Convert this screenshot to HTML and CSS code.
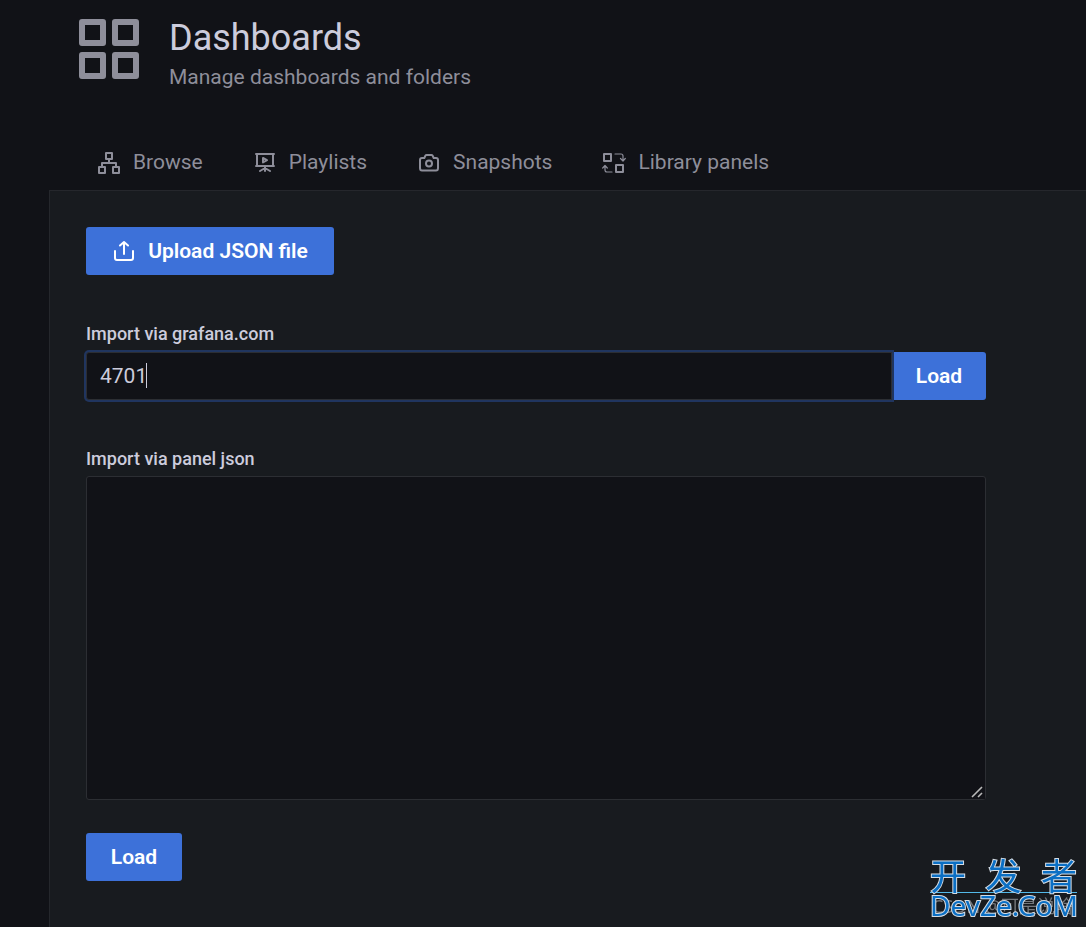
FILE: index.html
```html
<!DOCTYPE html>
<html lang="en">
<head>
<meta charset="utf-8">
<title>Dashboards</title>
<meta name="viewport" content="width=device-width, initial-scale=1">
<link rel="stylesheet" href="styles.css">
</head>
<body>
<div class="page">
  <header class="header">
    <div class="heading">
      <svg class="heading-icon" viewBox="0 0 60 60" fill="none" stroke="currentColor" stroke-width="6" stroke-linejoin="round" aria-hidden="true">
        <path d="M3 3h21v21H3zM36 3h21v21H36zM3 36h21v21H3zM36 36h21v21H36z"/>
      </svg>
      <div>
        <h1 class="title">Dashboards</h1>
        <p class="subtitle">Manage dashboards and folders</p>
      </div>
    </div>
    <nav class="tabs">
      <a class="tab" href="#browse">
        <svg class="icon" viewBox="0 0 24 24" fill="none" stroke="currentColor" stroke-width="2" stroke-linejoin="round" aria-hidden="true">
          <path d="M9 3h6v6H9zM2 17h6v6H2zM16 17h6v6h-6zM12 9v4M5 17v-4h14v4"/>
        </svg>Browse</a>
      <a class="tab" href="#playlists">
        <svg class="icon" viewBox="0 0 24 24" fill="none" stroke="currentColor" stroke-width="2" stroke-linecap="round" stroke-linejoin="round" aria-hidden="true">
          <path d="M3 4h18M4 4v12M20 4v12M3 16h18M12 16v5M12 18l-5 3M12 18l5 3M10 8v4.500l4-2.300z"/>
        </svg>Playlists</a>
      <a class="tab" href="#snapshots">
        <svg class="icon" viewBox="0 0 24 24" fill="none" stroke="currentColor" stroke-width="2" stroke-linejoin="round" aria-hidden="true">
          <path d="M5 8h2.300l1.200-2.500Q8.800 5 9.500 5h5q.7 0 1 .5L16.700 8H19q2 0 2 2v8q0 2.500-2 2.500H5q-2 0-2-2.500V10q0-2 2-2z"/><circle cx="12" cy="13.500" r="3"/>
        </svg>Snapshots</a>
      <a class="tab" href="#library">
        <svg class="icon" viewBox="0 0 24 24" fill="none" stroke="currentColor" aria-hidden="true">
          <path stroke-width="2" stroke-linejoin="round" d="M2 4h7v7H2zM14 15h7v7h-7z"/>
          <path stroke-width="1.200" stroke-linecap="round" stroke-linejoin="round" d="M13 4h6q2 0 2 2v5M18.500 8.500l2.500 2.500 2.300-2.500M10 22H5q-2 0-2-2v-4M.700 18L3 15.500l2.300 2.500"/>
        </svg>Library panels</a>
    </nav>
  </header>
  <main class="panel">
    <form class="form">
      <button class="button button-upload" type="button">
        <svg class="icon" viewBox="0 0 24 24" fill="none" stroke="currentColor" stroke-width="2" stroke-linecap="round" stroke-linejoin="round" aria-hidden="true">
          <path d="M12 15V3M8 6.500L12 3l4 3.500M3 12v7q0 2 2 2h14q2 0 2-2v-7"/>
        </svg>Upload JSON file</button>
      <div class="field">
        <label class="label" for="gcom">Import via grafana.com</label>
        <div class="row">
          <div class="entry">
            <input class="input" id="gcom" type="text" value="4701">
            <span class="caret" aria-hidden="true"></span>
          </div>
          <button class="button button-joined" type="button">Load</button>
        </div>
      </div>
      <div class="field">
        <label class="label" for="json">Import via panel json</label>
        <div class="entry">
          <textarea class="textarea" id="json" rows="12"></textarea>
          <svg class="grip" viewBox="0 0 12 12" stroke="#b9b9b9" stroke-width="1.600" aria-hidden="true">
            <path d="M1 11L11 1M7 11l4-4"/>
          </svg>
        </div>
      </div>
      <button class="button button-load" type="button">Load</button>
    </form>
  </main>
</div>
<div class="watermark">
  <span class="credit">CSDN @可是说啥</span>
  <div class="mark-top"><span>开</span><span>发</span><span>者</span></div>
  <div class="mark-bottom">DevZe.CoM</div>
</div>
</body>
</html>
```
FILE: styles.css
```css
* { box-sizing: border-box; }

body {
  margin: 0;
  background: #111217;
  color: #ccccdc;
  color-scheme: dark;
  font: 21px/32px Roboto, "Noto Sans CJK SC", sans-serif;
}

.page {
  display: flex;
  flex-direction: column;
  min-height: 100vh;
  padding-left: 49px;
}

.header { padding: 16px 24px 0; }

.heading {
  display: flex;
  gap: 30px;
  padding-left: 6px;
  color: #8e8e9a;
}

.heading-icon {
  width: 60px;
  height: 60px;
  margin-top: 3px;
}

.title {
  margin: 0;
  color: #ccccdc;
  font-size: 36px;
  font-weight: 400;
  line-height: 44px;
}

.subtitle {
  margin: 0;
  line-height: 34px;
}

.tabs {
  display: flex;
  gap: 50px;
  margin-top: 40px;
  padding-left: 24px;
}

.tab {
  display: flex;
  align-items: center;
  gap: 12px;
  height: 56px;
  color: #8e8e9a;
  text-decoration: none;
  white-space: nowrap;
}

.icon {
  flex: none;
  width: 24px;
  height: 24px;
}

.panel {
  flex: 1;
  padding: 36px 36px 46px;
  background: #181b1f;
  border: solid #25272c;
  border-width: 1px 0 0 1px;
}

.form { max-width: 900px; }

.button {
  display: inline-flex;
  align-items: center;
  justify-content: center;
  gap: 12px;
  height: 48px;
  min-width: 96px;
  padding: 0 24px;
  border: 0;
  border-radius: 3px;
  background: #3d71d9;
  color: #fff;
  font: 600 21px/32px Roboto, sans-serif;
}

.button-upload { min-width: 248px; }

.button-joined {
  min-width: 94px;
  padding: 0 20px;
  border-radius: 0 3px 3px 0;
}

.button-load { margin-top: 33px; }

.field {
  display: flex;
  flex-direction: column;
  margin-top: 46px;
}

.label {
  margin-bottom: 6px;
  font-size: 18px;
  font-weight: 500;
  line-height: 25px;
}

.field + .field .label { margin-bottom: 5px; }

.row { display: flex; }

.entry {
  position: relative;
  flex: 1;
}

.input {
  display: block;
  width: 100%;
  height: 48px;
  padding: 0 13px;
  border: 1px solid #2c2e33;
  border-radius: 3px 0 0 3px;
  outline: 0;
  box-shadow: 0 0 0 2px #20355f;
  background: #111217;
  color: #ccccdc;
  font: inherit;
}

.caret {
  position: absolute;
  top: 11px;
  left: 60px;
  width: 1px;
  height: 25px;
  background: #ccccdc;
}

.textarea {
  display: block;
  width: 100%;
  height: 324px;
  padding: 6px 12px;
  border: 1px solid #2c2e33;
  border-radius: 3px;
  outline: 0;
  background: #111217;
  color: #ccccdc;
  font: inherit;
  resize: vertical;
}

.textarea::-webkit-resizer { background: #111217; }

.grip {
  position: absolute;
  right: 3px;
  bottom: 2px;
  width: 12px;
  height: 12px;
  pointer-events: none;
}

.watermark {
  position: fixed;
  right: 9px;
  bottom: 9px;
  width: 147px;
  color: #0b6fc4;
  font-family: "Noto Sans", "Noto Sans CJK SC", sans-serif;
  -webkit-text-stroke: 2px #d4dce4;
  paint-order: stroke fill;
}

.mark-top {
  display: flex;
  justify-content: space-between;
  border-bottom: 1px solid #53b9e8;
  font-size: 36px;
  line-height: 30px;
}

.mark-bottom {
  position: relative;
  font-size: 28px;
  line-height: 25px;
  white-space: nowrap;
}

.credit {
  position: absolute;
  right: 4px;
  bottom: 0;
  color: #75787c;
  font-size: 18px;
  line-height: 24px;
  white-space: nowrap;
  -webkit-text-stroke: 0;
}
```
